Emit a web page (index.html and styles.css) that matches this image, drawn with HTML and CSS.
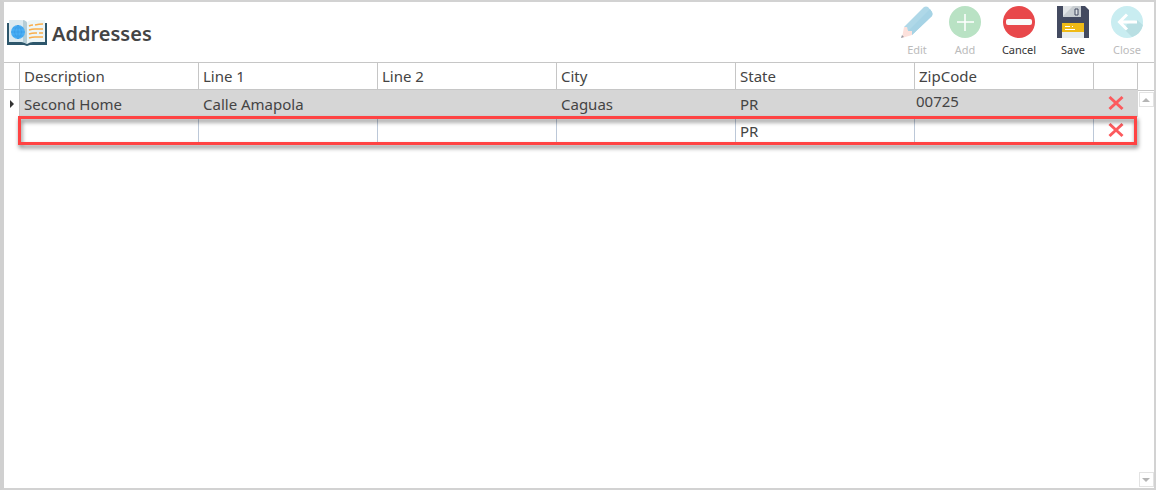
FILE: index.html
```html
<!DOCTYPE html>
<html lang="en">
<head>
    <meta charset="UTF-8">
    <meta name="viewport" content="width=device-width, initial-scale=1.0">
    <title>Addresses</title>
    <link rel="stylesheet" href="styles.css">
</head>
<body>
    <div class="window">
        <header class="header">
            <svg class="logo" width="40" height="27" viewBox="0 0 40 27">
                <path d="M0 4h2v19h38v3H23l-3 1-3-1H0zM38 4h2v20h-2z" fill="#2d566b"/>
                <path d="M2 1h12q5 0 6 3v21q-3-2-6-2H2z" fill="#dceaf0"/>
                <path d="M38 1H26q-5 0-6 3v21q3-2 6-2h12z" fill="#edf6f7"/>
                <path d="M16 1q4 1 4 3v21l-4-2z" fill="#b5cdd6"/>
                <circle cx="11" cy="13" r="7" fill="#4aaff5"/>
                <path d="M4 13h14M11 6v14M6 9h10M6 17h10M11 6q-7 7 0 14M11 6q7 7 0 14" fill="none" stroke="#3295e0" stroke-width=".5"/>
                <path d="M22 7q2-1 4-1M28 6q4-1 8-1M22 11q3-1 6-1h8M22 15q3-1 6-1h2M32 14h4M22 19q3-1 6-1h8" fill="none" stroke="#f9ae4b" stroke-width="1.5"/>
            </svg>
            <h1>Addresses</h1>
            <div class="toolbar">
                <button type="button" class="tool tool-edit" disabled>
                    <svg width="32" height="32" viewBox="0 0 32 32">
                        <path d="M3 21L23 1q2-1 4 0l4 5q1 2 0 4L11 29z" fill="#afd8e8"/>
                        <path d="M7 25L29 3l2 3q1 2 0 4L11 29z" fill="#a6d3e5"/>
                        <path d="M3 21l3 0 1 4 4 0v4L1 32z" fill="#fce1dc"/>
                        <path d="M1 29l2 2-3 1z" fill="#9b9ca4"/>
                    </svg>
                    Edit
                </button>
                <button type="button" class="tool tool-add" disabled>
                    <svg width="32" height="32" viewBox="0 0 32 32">
                        <circle cx="16" cy="16" r="16" fill="#b9e2c4"/>
                        <path d="M16 8v17M8 16h17" stroke="#fff" stroke-width="1.5"/>
                    </svg>
                    Add
                </button>
                <button type="button" class="tool tool-cancel">
                    <svg width="32" height="32" viewBox="0 0 32 32">
                        <circle cx="16" cy="16" r="16" fill="#e8484b"/>
                        <rect x="3" y="13" width="26" height="6" rx="2" fill="#fafafa"/>
                    </svg>
                    Cancel
                </button>
                <button type="button" class="tool tool-save">
                    <svg width="32" height="32" viewBox="0 0 32 32">
                        <path d="M0 0h28l4 4v28H0z" fill="#434a60"/>
                        <path d="M6 0h18v11H6z" fill="#c8cdd1"/>
                        <path d="M6 0h10L6 10z" fill="#e2e5e7"/>
                        <path d="M18 3h3v6h-3z" fill="#dfe2e5" stroke="#434a60"/>
                        <path d="M5 17h22v9H5z" fill="#efba16"/>
                        <path d="M5 26h22v6H5z" fill="#e7eced"/>
                        <path d="M8 20.5h5M15 20.5h1M8 23.5h10" stroke="#fff"/>
                    </svg>
                    Save
                </button>
                <button type="button" class="tool tool-close" disabled>
                    <svg width="32" height="32" viewBox="0 0 32 32">
                        <circle cx="16" cy="16" r="16" fill="#c9edf1"/>
                        <path d="M14 24l7 7q9-3 11-12l-6-5-10 4z" fill="#b9dfe3"/>
                        <path d="M26 16H9M16 8.500L8.500 16l7.500 7.500" fill="none" stroke="#fff" stroke-width="3"/>
                    </svg>
                    Close
                </button>
            </div>
        </header>

        <main class="grid">
            <div class="grid-body">
                <table>
                    <colgroup>
                        <col class="col-marker">
                        <col>
                        <col>
                        <col>
                        <col>
                        <col>
                        <col>
                        <col class="col-delete">
                    </colgroup>
                    <thead>
                        <tr>
                            <th></th>
                            <th>Description</th>
                            <th>Line 1</th>
                            <th>Line 2</th>
                            <th>City</th>
                            <th>State</th>
                            <th>ZipCode</th>
                            <th></th>
                        </tr>
                    </thead>
                    <tbody>
                        <tr class="selected">
                            <td class="marker"><svg width="4" height="8" viewBox="0 0 4 8"><path d="M0 0l4 4-4 4z" fill="#333"/></svg></td>
                            <td>Second Home</td>
                            <td>Calle Amapola</td>
                            <td></td>
                            <td>Caguas</td>
                            <td>PR</td>
                            <td class="zip">00725</td>
                            <td class="delete">
                                <button type="button" aria-label="Delete Second Home">
                                    <svg width="16" height="16" viewBox="0 0 16 16"><path d="M1.500 2l13 12M14.500 2l-13 12" stroke="#fc5a5d" stroke-width="3"/></svg>
                                </button>
                            </td>
                        </tr>
                        <tr class="new-row">
                            <td class="marker"></td>
                            <td></td>
                            <td></td>
                            <td></td>
                            <td></td>
                            <td>PR</td>
                            <td></td>
                            <td class="delete">
                                <button type="button" aria-label="Delete new address">
                                    <svg width="16" height="16" viewBox="0 0 16 16"><path d="M1.500 2l13 12M14.500 2l-13 12" stroke="#fc5a5d" stroke-width="3"/></svg>
                                </button>
                                <span class="highlight"></span>
                            </td>
                        </tr>
                    </tbody>
                </table>
            </div>
            <div class="scrollbar">
                <button type="button" aria-label="Scroll up">
                    <svg width="8" height="4" viewBox="0 0 8 4"><path d="M0 4l4-4 4 4z" fill="#b5b5b5"/></svg>
                </button>
                <button type="button" aria-label="Scroll down">
                    <svg width="8" height="4" viewBox="0 0 8 4"><path d="M0 0l4 4 4-4z" fill="#b5b5b5"/></svg>
                </button>
            </div>
        </main>
    </div>
</body>
</html>
```
FILE: styles.css
```css
* {
    box-sizing: border-box;
}
body {
    margin: 0;
    font-family: "Noto Sans", "Open Sans", sans-serif;
    font-size: 15px;
    color: #444;
}
button {
    padding: 0;
    border: none;
    background: none;
    font-family: inherit;
    cursor: pointer;
}
svg {
    display: block;
}
.window {
    display: flex;
    flex-direction: column;
    min-height: 100vh;
    border: 2px solid #d2d2d2;
    border-left: 4px solid #d0d0d0;
    background: #fff;
}
.header {
    display: flex;
    align-items: center;
    height: 60px;
    padding-left: 3px;
}
h1 {
    margin: 2px 0 0 5px;
    font-size: 20px;
    font-weight: 600;
    color: #444;
}
.toolbar {
    display: flex;
    margin-left: auto;
}
.tool {
    display: flex;
    flex-direction: column;
    align-items: center;
    gap: 4px;
    width: 54px;
    font-size: 11px;
    line-height: 16px;
    color: #333;
}
.tool:disabled {
    color: #bbb;
    cursor: default;
}
.tool-edit {
    width: 42px;
}
.grid {
    display: flex;
    flex: 1;
    border-top: 1px solid #c6c6c6;
}
.grid-body {
    flex: 1;
}
table {
    width: 100%;
    table-layout: fixed;
    border-collapse: separate;
    border-spacing: 0;
}
.col-marker {
    width: 16px;
}
.col-delete {
    width: 44px;
}
th, td {
    height: 27px;
    padding: 0 4px;
    border-right: 1px solid #c6c6c6;
    line-height: 20px;
    font-weight: 400;
    text-align: left;
}
th {
    border-bottom: 1px solid #c6c6c6;
}
.selected td {
    border-color: #d6d6d6;
    background: #d6d6d6;
}
.selected .marker {
    padding: 0 0 0 6px;
    border-color: #c6c6c6;
    background: #fff;
}
.selected .zip {
    padding: 0 0 5px 1px;
}
.new-row {
    position: relative;
}
.new-row td {
    border-color: #bcc8d8;
}
.new-row .marker,
.new-row .delete {
    border-color: transparent;
}
.delete button {
    display: block;
    margin: 0 auto;
}
td.delete {
    padding-bottom: 2px;
}
/* frame drawn around the row being added */
.highlight {
    position: absolute;
    top: -1px;
    right: 1px;
    bottom: -1px;
    left: 14px;
    border: 3px solid #ff4343;
    filter: drop-shadow(1px 3px 2px rgba(0, 0, 0, 0.5));
    pointer-events: none;
}
.scrollbar {
    display: flex;
    flex-direction: column;
    justify-content: space-between;
    align-items: center;
    width: 16px;
    padding-bottom: 1px;
}
.scrollbar::before {
    content: "";
    width: 100%;
    height: 27px;
    border-bottom: 1px solid #c6c6c6;
}
.scrollbar button {
    display: flex;
    align-items: center;
    justify-content: center;
    width: 15px;
    height: 15px;
    border: 1px solid #e3e3e3;
}
.scrollbar button:first-of-type {
    margin: 1px 0 auto;
}
```
